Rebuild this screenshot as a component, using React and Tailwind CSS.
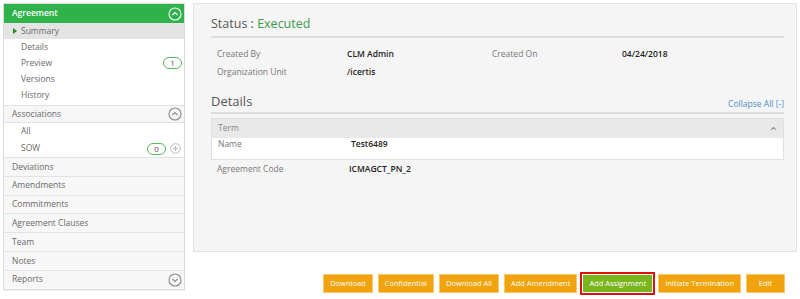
import { ChevronUp } from "lucide-react";

const font = { fontFamily: '"Open Sans", "Noto Sans", "Liberation Sans", sans-serif' };

function CircleChevron({ up = true, white = false }) {
  const c = white ? "#ffffff" : "#8a8a8a";
  return (
    <svg width="14" height="14" viewBox="0 0 14 14">
      <circle cx="7" cy="7" r="6" fill="none" stroke={c} strokeWidth="1.1" />
      <path
        d={up ? "M4.3 8.2 L7 5.5 L9.7 8.2" : "M4.3 5.8 L7 8.5 L9.7 5.8"}
        fill="none"
        stroke={c}
        strokeWidth="1.2"
      />
    </svg>
  );
}

function PlusCircle() {
  return (
    <svg width="11" height="11" viewBox="0 0 11 11">
      <circle cx="5.5" cy="5.5" r="4.8" fill="none" stroke="#b8b8b8" strokeWidth="1" />
      <path d="M5.5 3 V8 M3 5.5 H8" stroke="#b8b8b8" strokeWidth="1" />
    </svg>
  );
}

function Badge({ n }) {
  return (
    <span className="flex h-[12px] w-[19px] items-center justify-center rounded-full border border-[#5cb85c] text-[8px] leading-none text-[#555]">
      {n}
    </span>
  );
}

const subItems = ["Details", "Preview", "Versions", "History"];
const groups = ["Deviations", "Amendments", "Commitments", "Agreement Clauses", "Team", "Notes", "Reports"];
const buttons = ["Download", "Confidential", "Download All", "Add Amendment", "Add Assignment", "Initiate Termination", "Edit"];

function Sidebar() {
  return (
    <div className="mt-[3px] ml-[3px] w-[182px] shrink-0 self-start border border-[#dcdcdc] bg-white text-[8.5px] text-[#6a6a6a] shadow-[0_1px_1px_rgba(0,0,0,0.05)]">
      <div className="flex h-[19px] items-center justify-between bg-[#2db34a] pr-[2px] pl-[8px] font-semibold text-white">
        <span>Agreement</span>
        <CircleChevron white />
      </div>
      <div className="flex h-[16px] items-center bg-[#e4e4e4] pl-[9px]">
        <span className="mr-[4px] h-0 w-0 border-y-[3.5px] border-l-[4px] border-y-transparent border-l-[#2a8a2a]" />
        <span>Summary</span>
      </div>
      <div className="pb-[2px]">
        {subItems.map((s) => (
          <div key={s} className="flex h-[16px] items-center justify-between pr-[2px] pl-[17px]">
            <span>{s}</span>
            {s === "Preview" && <Badge n="1" />}
          </div>
        ))}
      </div>
      <div className="flex h-[18px] items-center justify-between border-y border-[#e2e2e2] bg-[#f6f6f6] pr-[2px] pl-[8px]">
        <span>Associations</span>
        <CircleChevron />
      </div>
      <div className="flex h-[17px] items-center pl-[17px]">All</div>
      <div className="flex h-[17px] items-center justify-between pr-[3px] pl-[17px]">
        <span>SOW</span>
        <span className="flex items-center gap-[4px]">
          <Badge n="0" />
          <PlusCircle />
        </span>
      </div>
      {groups.map((g) => (
        <div
          key={g}
          className="flex h-[18.8px] items-center justify-between border-t border-[#e2e2e2] bg-[#f7f7f7] pr-[2px] pl-[8px]"
        >
          <span>{g}</span>
          {g === "Reports" && <CircleChevron up={false} />}
        </div>
      ))}
    </div>
  );
}

function Field({ label, value }) {
  return (
    <div className="flex h-[18px] items-center">
      <span className="w-[130px] text-[#777]">{label}</span>
      <span className="font-semibold text-[#222]">{value}</span>
    </div>
  );
}

export default function App() {
  return (
    <div className="flex h-[299px] w-[800px] overflow-hidden bg-white" style={font}>
      <Sidebar />
      <div className="ml-[8px] flex w-[604px] flex-col">
        <div className="mt-[3px] h-[249px] border border-[#e2e2e2] bg-[#f5f5f5] pt-[11px] pr-[12px] pl-[17px] text-[8.5px]">
          <div className="border-b-2 border-[#dedede] pb-[2px] text-[12.5px] text-[#555]">
            Status : <span className="text-[#3a9a4a]">Executed</span>
          </div>
          <div className="mt-[8px] flex pl-[6px]">
            <div className="w-[275px]">
              <Field label="Created By" value="CLM Admin" />
              <Field label="Organization Unit" value="/icertis" />
            </div>
            <div>
              <Field label="Created On" value="04/24/2018" />
            </div>
          </div>
          <div className="mt-[10px] flex items-end justify-between border-b-2 border-[#dedede] pb-[1px]">
            <span className="text-[13px] text-[#555]">Details</span>
            <span className="pb-[1px] text-[8.5px] text-[#4f8fc6]">Collapse All [-]</span>
          </div>
          <div className="mt-[4px] border border-[#e0e0e0] bg-white">
            <div className="flex h-[19px] items-center justify-between bg-[#e9e9e9] pr-[5px] pl-[6px] text-[#888]">
              <span>Term</span>
              <ChevronUp size={9} strokeWidth={3} color="#999" />
            </div>
            <div className="flex h-[21px] items-start pl-[6px]">
              <span className="w-[133px] text-[#777]">Name</span>
              <span className="font-semibold text-[#222]">Test6489</span>
            </div>
          </div>
          <div className="mt-[1px] flex h-[16px] items-center pl-[6px]">
            <span className="w-[132px] text-[#777]">Agreement Code</span>
            <span className="font-semibold text-[#222]">ICMAGCT_PN_2</span>
          </div>
        </div>
        <div className="mt-[23px] flex justify-end gap-[7px] pr-[13px]">
          {buttons.map((b) =>
            b === "Add Assignment" ? (
              <div key={b} className="-mx-[3px] -my-[3px] border-2 border-[#e01010] p-[1px]">
                <div className="flex h-[17px] items-center bg-[#7ab51d] px-[6px] text-[7.5px] text-white">{b}</div>
              </div>
            ) : (
              <div
                key={b}
                className="flex h-[17px] min-w-[37px] items-center justify-center bg-[#f0a30a] px-[6px] text-[7.5px] text-white shadow-[0_0_0_1px_#f7c873]"
              >
                {b}
              </div>
            )
          )}
        </div>
      </div>
    </div>
  );
}
